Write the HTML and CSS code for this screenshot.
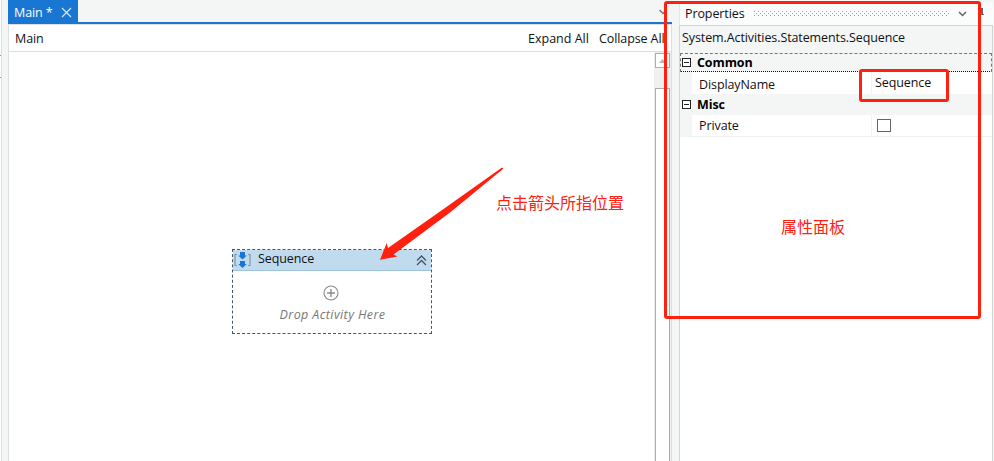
FILE: index.html
```html
<!DOCTYPE html>
<html lang="en">
<head>
<meta charset="utf-8">
<title>Main - Designer</title>
<link rel="stylesheet" href="styles.css">
</head>
<body>
<div class="app">
  <aside class="edge"><i class="first"></i><i></i></aside>
  <main class="document">
    <header class="tabs">
      <div class="tab"><span>Main *</span>
        <svg width="11" height="11" viewBox="0 0 11 11"><path d="M1 1l9 9M10 1l-9 9" fill="none" stroke="#d5e8fa" stroke-width="1.2"/></svg>
      </div>
      <svg class="tab-menu" width="8" height="6" viewBox="0 0 8 6"><path d="M.5 1L4 4.5 7.5 1" fill="none" stroke="#777" stroke-width="1.5"/></svg>
    </header>
    <div class="toolbar">
      <span class="crumb">Main</span>
      <span class="expand">Expand All</span>
      <span class="collapse">Collapse All</span>
    </div>
    <div class="workspace">
      <div class="canvas">
        <section class="activity">
          <div class="activity-head">
            <svg width="18" height="18" viewBox="0 0 18 18"><path d="M4 3.500H2v11h2M15 3.500h2v11h-2" fill="none" stroke="#8496a3" stroke-width="1.200"/><path d="M7 1h5v3.500h1.800L9.500 8.500 5.200 4.500H7zM7 10h5v3h1.800L9.500 17l-4.300-4H7z" fill="#1976d8"/></svg>
            <span>Sequence</span>
            <svg class="chevrons" width="11" height="11" viewBox="0 0 11 11"><path d="M1 5.500l4.500-4.500L10 5.500M1 10l4.500-4.500L10 10" fill="none" stroke="#405466" stroke-width="1.3"/></svg>
          </div>
          <div class="drop">
            <svg width="16" height="16" viewBox="0 0 16 16"><g fill="none" stroke="#8b8b8b" stroke-width="1.1"><circle cx="8" cy="8" r="7"/><path d="M4 8h8M8 4v8" stroke-width="1.400"/></g></svg>
            <em>Drop Activity Here</em>
          </div>
        </section>
      </div>
      <div class="scrollbar">
        <div class="up"><svg width="7" height="4" viewBox="0 0 7 4"><path d="M0 4L3.500 0 7 4z" fill="#b5b5b5"/></svg></div>
        <div class="thumb"></div>
      </div>
    </div>
  </main>
  <aside class="properties">
    <header class="title">
      <span>Properties</span>
      <svg class="grip" width="196" height="5"><defs><pattern id="dots" width="4" height="4" patternUnits="userSpaceOnUse"><path d="M0 0h1v1H0zM2 2h1v1H2z" fill="#999"/></pattern></defs><rect width="196" height="5" fill="url(#dots)"/></svg>
      <svg class="menu" width="9" height="6" viewBox="0 0 9 6"><path d="M1 1l3.500 3.500L8 1" fill="none" stroke="#666" stroke-width="1.500"/></svg>
      <svg class="pin" width="7" height="8" viewBox="0 0 7 8"><path d="M1 0h4v6h1v1H0V6h1z" fill="#666"/></svg>
    </header>
    <div class="grid">
      <div class="type">System.Activities.Statements.Sequence</div>
      <div class="group common"><i class="toggle"></i><b>Common</b></div>
      <div class="row display"><span class="name">DisplayName</span><span class="value">Sequence</span></div>
      <div class="group misc"><i class="toggle"></i><b>Misc</b></div>
      <div class="row private"><span class="name">Private</span><span class="value"><i class="check"></i></span></div>
    </div>
  </aside>
  <svg class="arrow" width="994" height="461" viewBox="0 0 994 461"><path d="M502 167.500L503.300 168.800 450 212.500 393.500 254.500 397.500 256.500 380 259.800 386.700 243 388 248 440 211.500z" fill="#ff2010"/></svg>
  <div class="mark panel-mark"></div>
  <div class="mark value-mark"></div>
  <div class="note click-note">点击箭头所指位置</div>
  <div class="note panel-note">属性面板</div>
</div>
</body>
</html>
```
FILE: styles.css
```css
* { box-sizing: border-box; }
body { margin: 0; font: 12.5px/18px "Open Sans", "Noto Sans", sans-serif; letter-spacing: -.1px; color: #111; }
svg { display: block; flex: none; }
.app { position: relative; display: flex; width: 994px; height: 461px; overflow: hidden; background: #f4f6f6; }
.edge { width: 2px; margin-right: 6px; background: #fff; border-right: 1px solid #dedfe0; }
.edge i { display: block; width: 1px; height: 1px; background: #999; }
.edge .first { margin: 55px 0 21px; }
.document { display: flex; flex-direction: column; width: 664px; }
.tabs { display: flex; flex: none; justify-content: space-between; height: 24px; border-bottom: 2px solid #1976d2; }
.tab { display: flex; width: 70px; height: 22px; padding: 4px 0 0 6px; background: #1976d2; color: #fff; }
.tab svg { margin: 3px 0 0 8px; }
.tab span { width: 39px; white-space: nowrap; }
.tab-menu { margin: 9px 5px 0 0; }
.toolbar { display: flex; flex: none; height: 28px; padding: 5px 0 0 6px; background: #fff; border: 1px solid #dcdedf; white-space: nowrap; }
.toolbar .crumb { width: 513px; }
.toolbar .expand { width: 71px; letter-spacing: 0; }
.workspace { display: flex; flex: 1; min-height: 0; background: #fff; border: solid #dcdedf; border-width: 0 1px; }
.canvas { flex: 1; padding: 197px 0 0 223px; }
.activity { width: 200px; height: 85px; border: 1px dashed #3f596d; background: #fff; }
.activity-head { display: flex; height: 21px; background: #c1dbee; border-bottom: 1px solid #9fc3df; }
.activity-head span { margin: 0 0 0 7px; }
.activity-head svg:first-child { margin-top: 1px; }
.activity-head .chevrons { margin: 5px 4px 0 auto; }
.drop { display: flex; flex-direction: column; align-items: center; padding: 14px 2px 0 0; color: #777; }
.drop em { margin: 5px 0 0 3px; letter-spacing: .4px; }
.scrollbar { display: flex; flex-direction: column; width: 17px; background: #f0f0f0; padding: 1px 1px 0 1px; }
.up { display: flex; flex: none; justify-content: center; width: 15px; height: 15px; padding-top: 5px; border: 1px solid #acacac; background: #fff; }
.thumb { flex: 1; width: 15px; margin-top: 20px; border: 1px solid #acacac; border-bottom: 0; background: #fff; }
.properties { display: flex; flex-direction: column; width: 314px; margin-left: 7px; }
.title { display: flex; flex: none; height: 23px; margin-top: 2px; padding-left: 5px; border-left: 1px solid #e4e6e6; background: #fbfcfc; white-space: nowrap; }
.title span { width: 69px; padding-top: 3px; }
.title .grip { margin-top: 9px; }
.title .menu { margin: 9px 0 0 8px; }
.title .pin { margin: 6px 0 0 11px; }
.grid { flex: 1; background: #fff; border: 1px solid #d2d4d4; border-bottom: 0; }
.type { height: 27px; padding: 3px 0 0 2px; background: #f4f6f6; white-space: nowrap; }
.group { display: flex; align-items: center; background: #f4f6f6; color: #000; }
.group b { margin-left: 6px; }
.toggle { width: 9px; height: 9px; margin-left: 2px; border: 1px solid #222; background: linear-gradient(#222, #222) center / 5px 1px no-repeat #fff; }
.common { height: 19px; border: 1px dashed #777; border-bottom: 1px dotted #111; }
.common .toggle { margin-left: 1px; }
.misc { height: 21px; }
.row { display: flex; border-left: 12px solid #f4f6f6; }
.row .name { width: 180px; padding-left: 7px; border-right: 1px solid #f1f3f3; }
.row .value { padding-left: 3px; }
.display { height: 22px; }
.display .name { padding-top: 4px; }
.display .value { padding-top: 2px; }
.private { height: 22px; border-bottom: 1px solid #f1f3f3; }
.private .name { padding-top: 2px; }
.check { display: block; width: 14px; height: 13px; margin: 4px 0 0 2px; border: 1px solid #666; background: #fff; }
.arrow { position: absolute; inset: 0; }
.mark { position: absolute; border: 3px solid #ff2010; border-radius: 3px; }
.panel-mark { left: 664px; top: 1px; width: 317px; height: 318px; }
.value-mark { left: 859px; top: 69px; width: 90px; height: 33px; }
.note { position: absolute; color: #ff2010; font: 16px/22px "Noto Sans CJK SC", sans-serif; letter-spacing: 0; white-space: nowrap; }
.click-note { left: 496px; top: 191px; }
.panel-note { left: 781px; top: 215px; }
```
